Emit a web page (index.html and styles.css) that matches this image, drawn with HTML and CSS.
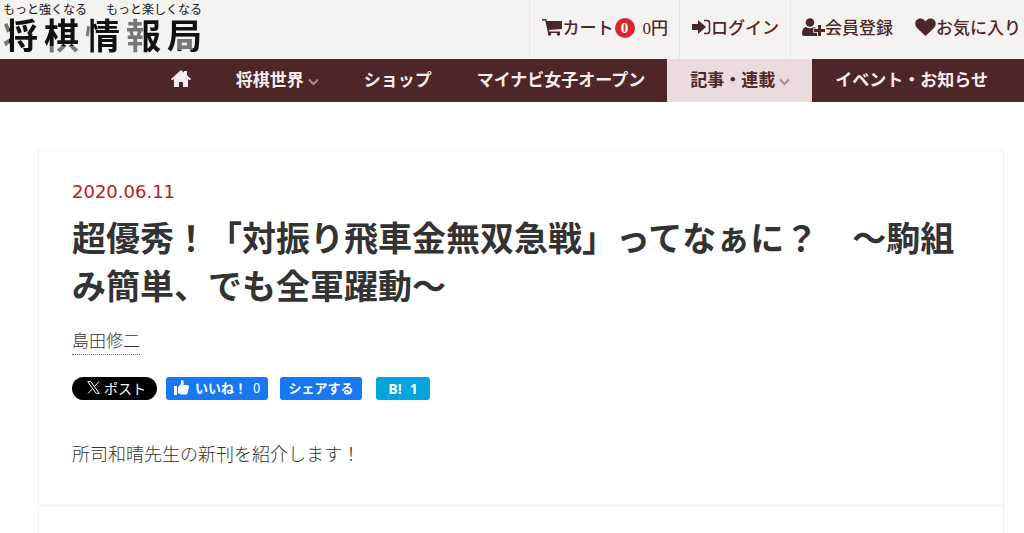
FILE: index.html
```html
<!DOCTYPE html>
<html lang="ja">
<head>
  <meta charset="utf-8">
  <title>将棋情報局</title>
  <link rel="stylesheet" href="styles.css">
</head>
<body>
  <header class="header">
    <a href="#" class="logo">
      <span class="tagline"><span>もっと強くなる</span><span>もっと楽しくなる</span></span>
      <span class="logo-name"><span class="sho">将</span><span class="ki">棋</span><span class="jo">情</span><span class="ho">報</span><span class="kyoku">局</span></span>
    </a>
    <div class="user-menu">
      <a href="#" class="cart">
        <svg width="21" height="18" viewBox="0 0 21 18"><path d="M0 1h4l1 2h15v8l-13 1 .4 1.500H18V15H6L3.300 2.500H0z"/><circle cx="7.500" cy="16" r="1.700"/><circle cx="16.500" cy="16" r="1.700"/></svg>
        カート<span class="badge">0</span><span class="price">0円</span>
      </a>
      <a href="#" class="login">
        <svg width="19" height="18" viewBox="0 0 19 18"><path d="M0 6h6V2l8 7-8 7v-4H0z"/><path d="M12 2.500h3q2.500 0 2.500 2.500v8q0 2.500-2.500 2.500h-3" fill="none" stroke="#4d2628" stroke-width="1.500"/></svg>
        ログイン
      </a>
      <a href="#" class="register">
        <svg width="23" height="18" viewBox="0 0 23 18"><circle cx="8" cy="4.500" r="4.300"/><path d="M4 9q4 2.500 8 0 1.500.3 2.300 1.500H14v3h1V18H2q-2 0-2-2.500Q0 9.500 4 9z"/><path d="M16 7h3v4h4v3h-4v4h-3v-4h-4v-3h4z" stroke="#f4f3ef" stroke-width="1.500" paint-order="stroke"/></svg>
        会員登録
      </a>
      <a href="#" class="favorite">
        <svg width="21" height="18" viewBox="0 0 21 18"><path d="M10.500 18 2 10C-1.500 6 .5.500 5.500.500c2.500 0 4 1.500 5 3 1-1.500 2.500-3 5-3 5 0 7 5.500 3.500 9.500z"/></svg>
        お気に入り
      </a>
    </div>
  </header>

  <nav class="nav">
    <a href="#" aria-label="ホーム"><svg width="20" height="17" viewBox="0 0 20 17"><path d="M10 0 0 9l1.200 1.300L3 9v8h5v-5h4v5h5V9l1.800 1.300L20 9l-4-3.700V1h-3v1.700z"/></svg></a>
    <a href="#">将棋世界<svg class="arrow" width="11" height="8" viewBox="0 0 11 8"><path d="m1 1.500 4.500 4.500L10 1.500"/></svg></a>
    <a href="#">ショップ</a>
    <a href="#">マイナビ女子オープン</a>
    <a href="#" class="active">記事・連載<svg class="arrow" width="11" height="8" viewBox="0 0 11 8"><path d="m1 1.500 4.500 4.500L10 1.500"/></svg></a>
    <a href="#">イベント・お知らせ</a>
  </nav>

  <main class="article">
    <section class="article-head">
      <time class="date" datetime="2020-06-11">2020.06.11</time>
      <h1>超優秀！「対振り飛車金無双急戦」ってなぁに？　～駒組み簡単、でも全軍躍動～</h1>
      <a href="#" class="author">島田修二</a>
      <div class="share">
        <button class="post"><svg width="13" height="13" viewBox="0 0 13 13"><path d="M.7.700h3.100l8.500 11.600H9.200zM12 .500 7.200 6M5.700 7.500 1 12.500" fill="none" stroke="#fff"/></svg>ポスト</button>
        <button class="like"><svg width="15" height="15" viewBox="0 0 15 15"><path d="M0 6h3v9H0zM4 7l3-3V1q0-1 1-1 2.500 0 1.500 5H13q2 0 2 2l-1.500 6q-.5 1.500-2 1.500H7L4 13z"/></svg>いいね！<span>0</span></button>
        <button class="fb-share">シェアする</button>
        <button class="hatena">B!<span>1</span></button>
      </div>
      <p class="lead">所司和晴先生の新刊を紹介します！</p>
    </section>
    <section class="article-body"></section>
  </main>
</body>
</html>
```
FILE: styles.css
```css
* {
  box-sizing: border-box;
}

body {
  margin: 0;
  min-height: 100vh;
  display: flex;
  flex-direction: column;
  background: #fff;
  color: #333;
  font-family: "Noto Sans CJK JP", sans-serif;
  font-size: 17px;
}

a {
  color: inherit;
  text-decoration: none;
}

svg {
  fill: currentColor;
  flex-shrink: 0;
}

/* header */
.header {
  display: flex;
  justify-content: space-between;
  height: 59px;
  background: #f4f3ef;
  color: #4d2628;
}

.logo {
  width: 202px;
  padding: 2px 0 0 3px;
  color: #111;
}

.tagline,
.logo-name {
  display: flex;
  justify-content: space-between;
}

.tagline {
  font-size: 12px;
  line-height: 14px;
}

.logo-name {
  font-size: 35px;
  font-weight: bold;
  line-height: 36px;
}

.logo-name span {
  padding-bottom: 4px;
  color: transparent;
  -webkit-background-clip: text;
  background-clip: text;
}

.logo-name .sho {
  background-image: linear-gradient(90deg, #777 18%, #111 18%);
}

.logo-name .ki {
  background-image: linear-gradient(#111 74%, #777 74%);
}

.logo-name .jo {
  background-image: linear-gradient(90deg, #777 17%, #111 17%);
}

.logo-name .ho {
  background-image: linear-gradient(90deg, #777 50%, #111 50%);
}

/* the inner box of the character is grey */
.logo-name .kyoku {
  background-image: linear-gradient(#777, #777), linear-gradient(#111, #111);
  background-position: 9px 20px, 0 0;
  background-size: 17px 14px, 100% 100%;
  background-repeat: no-repeat;
}

.user-menu {
  display: flex;
  font-weight: 500;
}

.user-menu a {
  display: flex;
  align-items: center;
  padding: 0 11px 6px;
  white-space: nowrap;
}

.user-menu .cart,
.user-menu .login {
  padding-left: 12px;
}

.user-menu .cart,
.user-menu .login,
.user-menu .register {
  border-left: 1px solid #e9e7e4;
}

.user-menu .favorite {
  padding-right: 3px;
}

.badge {
  width: 20px;
  height: 20px;
  margin: 2px 8px 0 1px;
  border-radius: 50%;
  background: #d9252d;
  color: #fff;
  font: bold 15px/20px "Liberation Serif", serif;
  text-align: center;
}

.price {
  font-family: "Liberation Serif", "Noto Sans CJK JP", serif;
}

/* navigation */
.nav {
  display: flex;
  justify-content: flex-end;
  height: 43px;
  padding-right: 14px;
  background: #4d2628;
  color: #f6eeee;
  font-weight: bold;
}

.nav a {
  display: flex;
  align-items: center;
  padding: 0 22px 4px;
  white-space: nowrap;
}

.nav a + a {
  padding-left: 23px;
}

.nav .active {
  background: #ebdbdc;
  color: #4d2628;
}

.nav .arrow {
  margin: 6px 0 0 4px;
  fill: none;
  stroke: #a58e8f;
  stroke-width: 2;
}

/* article */
.article {
  flex: 1;
  display: flex;
  flex-direction: column;
  margin: 48px 20px 0 38px;
  border: 1px solid #f5eff0;
  border-bottom: 0;
}

.article-head {
  display: flex;
  flex-direction: column;
  align-items: flex-start;
  padding: 28px 33px 38px;
  border-bottom: 1px solid #f1eeee;
}

.date {
  color: #b81c22;
  font: 18px/26px "DejaVu Sans", sans-serif;
}

h1 {
  margin: 8px 0 12px;
  font-size: 34px;
  line-height: 48px;
}

.author {
  margin-top: 5px;
  border-bottom: 1px dotted #666;
  font-weight: 300;
  line-height: 28px;
}

.share {
  display: flex;
  margin: 22px 0 39px;
}

.share button {
  display: flex;
  align-items: center;
  justify-content: center;
  height: 23px;
  padding: 0 0 2px;
  border: 0;
  border-radius: 3px;
  background: #1877f2;
  color: #fff;
  font-family: inherit;
  font-size: 13px;
  font-weight: bold;
  cursor: pointer;
}

.share .post {
  width: 85px;
  gap: 4px;
  padding-left: 4px;
  margin-right: 9px;
  border-radius: 12px;
  background: #000;
  font-size: 14px;
  font-weight: normal;
}

.share .like {
  width: 102px;
  gap: 6px;
  margin-right: 12px;
}

.like span {
  font-weight: normal;
}

.share .fb-share {
  width: 82px;
  margin-right: 14px;
}

.share .hatena {
  width: 54px;
  gap: 8px;
  padding: 0;
  background: #00a4de;
  font-family: "Open Sans", sans-serif;
  font-size: 14px;
}

.lead {
  margin: 0;
  font-size: 18px;
  font-weight: 300;
  line-height: 28px;
}

.article-body {
  flex: 1;
}
```
